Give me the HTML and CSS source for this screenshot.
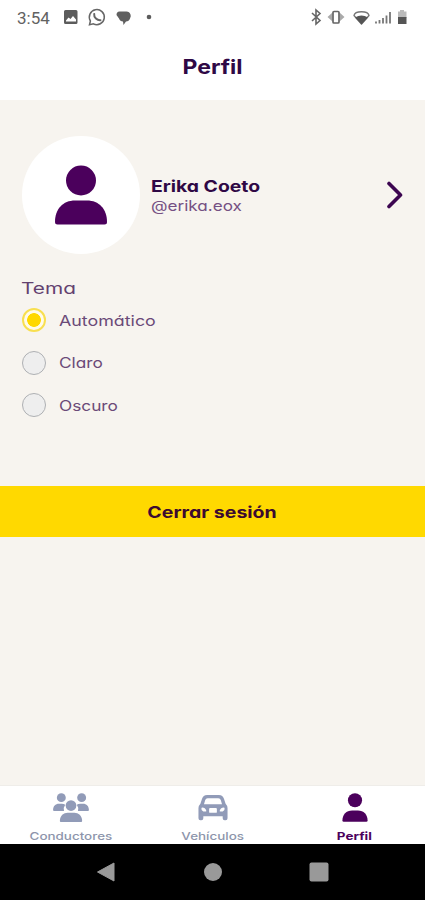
FILE: index.html
```html
<!DOCTYPE html>
<html lang="es">
<head>
  <meta charset="UTF-8">
  <meta name="viewport" content="width=device-width, initial-scale=1.0">
  <title>Perfil</title>
  <link rel="stylesheet" href="styles.css">
</head>
<body>
  <div class="screen">
    <!-- Status bar -->
    <div class="status-bar">
      <span class="clock">3:54</span>
      <svg class="status-left" width="92" height="24" viewBox="0 0 92 24">
        <path fill="#5c5c5c" fill-rule="evenodd" d="M2.500 4H13a1.500 1.500 0 0 1 1.500 1.500v11A1.500 1.500 0 0 1 13 18H2.500A1.500 1.500 0 0 1 1 16.500v-11A1.500 1.500 0 0 1 2.500 4zm.5 11.500h10v-2l-3-3.500-2.500 3-2-1.500-2.500 3z"/>
        <path fill="none" stroke="#666" stroke-width="1.500" d="M26.500 18.700 27.400 15a7.500 7.500 0 1 1 3 2.800z"/>
        <path fill="none" stroke="#666" stroke-width="2" stroke-linecap="round" d="M31.200 8c-.5 3.500 3 6.500 6.300 6.200"/>
        <path fill="#606060" d="M56.500 5.500h7q3 0 4 3 .8 1.500-.5 4-1 3-4 3L60.500 19l-.5-3.500q-3 0-4-3l-2.500-3.500q0-3.500 3-3.500z"/>
        <circle cx="86" cy="11" r="2.300" fill="#5c5c5c"/>
      </svg>
      <svg class="status-right" width="98" height="24" viewBox="0 0 98 24">
        <path fill="none" stroke="#666" stroke-width="1.600" d="M2 7l8 7.500-4 3.500V4l4 3.500L2 15"/>
        <path fill="#aaa" d="M17.500 11l5-4.500v9zM34.500 11l-5-4.500v9z"/>
        <rect x="23" y="5.500" width="6" height="11.500" rx="1" fill="#fff" stroke="#666" stroke-width="1.700"/>
        <path fill="#fff" stroke="#777" stroke-width="1.400" stroke-linejoin="round" d="M44 9.500c1-5 14-5 15 0L51.500 18z"/>
        <path fill="#555" d="M45 11.500q6.500-4 13 0L51.500 18.500z"/>
        <path fill="none" stroke="#777" stroke-width="1.800" d="M66 17.500v-2M69.500 17.500v-3.500M73 17.500V12M76.500 17.500V9.500M80 17.500V6"/>
        <path fill="#bbb" d="M88 5.500h2V4h4v1.500h2.500V12H88z"/>
        <path fill="#555" d="M88 11h8.500v7H88z"/>
      </svg>
    </div>

    <header class="header"><h1>Perfil</h1></header>

    <main class="content">
      <div class="profile">
        <div class="avatar">
          <svg width="52" height="60" viewBox="0 0 52 60">
            <circle cx="26" cy="15.500" r="15"/>
            <path d="M0 57C0 44 8 35.500 20 35.500h12c12 0 20 8.500 20 21.500q0 2.500-2.500 2.500h-47Q0 59.500 0 57z"/>
          </svg>
        </div>
        <div class="profile-text">
          <span class="name">Erika Coeto</span>
          <span class="username">@erika.eox</span>
        </div>
        <svg class="chevron" width="16" height="28" viewBox="0 0 16 28">
          <path d="M2 2.500 13.500 14 2 25.500"/>
        </svg>
      </div>

      <h2 class="theme-title">Tema</h2>
      <label class="option"><input type="radio" name="tema" checked><span class="automatic">Automático</span></label>
      <label class="option"><input type="radio" name="tema"><span>Claro</span></label>
      <label class="option"><input type="radio" name="tema"><span>Oscuro</span></label>

      <button class="logout"><span>Cerrar sesión</span></button>
    </main>

    <!-- Tabs -->
    <nav class="tabs">
      <a class="tab">
        <svg width="38" height="32" viewBox="0 0 38 32">
          <circle cx="9" cy="4.800" r="4.600"/>
          <circle cx="30" cy="4.800" r="4.600"/>
          <path d="M.5 17.500c0-4 2.500-6.500 6-6.500h3q2 0 3.500 1a7.500 7.500 0 0 0-1.200 6.500H1.500q-1 0-1-1zM37.500 17.500c0-4-2.500-6.500-6-6.500h-3q-2 0-3.500 1a7.500 7.500 0 0 1 1.200 6.500h10.300q1 0 1-1z"/>
          <circle cx="19" cy="13" r="5.500"/>
          <path d="M7.500 29c0-5.500 4-8.500 8-8.500h7c4 0 8 3 8 8.500q0 1-1 1h-21q-1 0-1-1z"/>
        </svg>
        <span>Conductores</span>
      </a>
      <a class="tab">
        <svg width="30" height="32" viewBox="0 0 30 32">
          <path fill-rule="evenodd" d="M9 2h12c3 0 4.500 1.500 5.300 4L28 11q2 2 2 4.500V26q0 2-2 2h-1q-2 0-2-2v-2H5v2q0 2-2 2H2q-2 0-2-2V15.500Q0 13 2 11l1.700-5C4.500 3.500 6 2 9 2zm.5 3.500q-2 0-2.600 2L5.700 11.500h18.600l-1.200-4q-.6-2-2.600-2zM4 15q-1 0-1 1.500T5 19h2.500q1 0 .5-1-1-3-4-3zm22 0q1 0 1 1.500T25 19h-2.500q-1 0-.5-1 1-3 4-3zM12 15.500q-1 0-1 1v3q0 1 1 1h6q1 0 1-1v-3q0-1-1-1z"/>
        </svg>
        <span>Vehículos</span>
      </a>
      <a class="tab selected">
        <svg width="26" height="32" viewBox="0 0 26 32">
          <circle cx="13" cy="7.500" r="7.300"/>
          <path d="M0 28.500c0-6.500 4-10.500 10-10.500h6c6 0 10 4 10 10.500q0 1.300-1.300 1.300H1.300Q0 29.800 0 28.500z"/>
        </svg>
        <span>Perfil</span>
      </a>
    </nav>

    <!-- Android navigation -->
    <div class="android-nav">
      <svg width="20" height="20" viewBox="0 0 20 20"><path d="M18 1v18L1.500 10z" stroke="#999" stroke-linejoin="round"/></svg>
      <svg width="20" height="20" viewBox="0 0 20 20"><circle cx="10" cy="10" r="9"/></svg>
      <svg width="20" height="20" viewBox="0 0 20 20"><rect x=".5" y=".5" width="19" height="19" rx="2"/></svg>
    </div>
  </div>
</body>
</html>
```
FILE: styles.css
```css
* {
  box-sizing: border-box;
}
body {
  margin: 0;
  font-family: 'Inter', 'Open Sans', sans-serif;
  font-feature-settings: "cv11"; /* single-storey a */
  color: #2f0845;
}
.screen {
  display: flex;
  flex-direction: column;
  width: 100%;
  height: 900px;
  overflow: hidden;
  background: #f7f4ef;
}
span, h1, h2 {
  white-space: nowrap;
}
.status-bar {
  display: flex;
  height: 34px;
  padding: 6px 17px 0;
  background: #fff;
}
.clock {
  width: 46px;
  font-family: 'Roboto', sans-serif;
  font-size: 17px;
  line-height: 24px;
  color: #626262;
}
.status-right {
  margin-left: auto;
}
.header {
  height: 66px;
  background: #fff;
  text-align: center;
}
.header h1 {
  margin: 0;
  font-size: 20px;
  line-height: 67px;
  transform: scaleX(1.15);
}
.content {
  flex: 1;
  padding-top: 36px;
}
.profile {
  display: flex;
  align-items: center;
  height: 118px;
  padding: 0 22px;
}
.avatar {
  display: flex;
  align-items: center;
  justify-content: center;
  width: 118px;
  height: 118px;
  border-radius: 50%;
  background: #fff;
  fill: #4b005c;
}
.profile-text {
  display: flex;
  flex-direction: column;
  align-items: flex-start;
  margin: 1px 0 0 11px;
}
.name, .username {
  line-height: 19px;
  transform-origin: left;
}
.name {
  font-size: 16px;
  font-weight: 700;
  transform: scaleX(1.21);
}
.username {
  font-size: 14.5px;
  color: #755083;
  transform: scaleX(1.18);
}
.chevron {
  margin-left: auto;
  fill: none;
  stroke: #3c0550;
  stroke-width: 3.6;
  stroke-linecap: round;
  stroke-linejoin: round;
}
.theme-title {
  width: max-content;
  margin: 22px 0 0 21px;
  font-size: 16.5px;
  font-weight: 400;
  line-height: 24px;
  color: #63416f;
  transform: scaleX(1.26);
  transform-origin: left;
}
.option {
  display: flex;
  align-items: center;
  height: 42.5px;
  margin-left: 22px;
  font-size: 14.5px;
  color: #6b4a78;
}
.theme-title + .option {
  margin-top: -1px;
}
.option span {
  transform: scaleX(1.19);
  transform-origin: left;
}
.option .automatic {
  transform: scaleX(1.23);
}
.option input {
  appearance: none;
  width: 24px;
  height: 24px;
  margin: 0 13px 0 0;
  border: 1.5px solid #aeb0b3;
  border-radius: 50%;
  background: #eeeeee;
}
.option input:checked {
  border: 2px solid #f8df50;
  background: radial-gradient(circle, #ffd800 6.5px, #fffbea 7.2px);
}
.logout {
  display: block;
  width: 100%;
  height: 51px;
  margin: 59px 0 0;
  padding: 2px 0 0;
  border: none;
  background: #ffd900;
  font: inherit;
  font-size: 16px;
  font-weight: 700;
  color: #3c0a30;
}
.logout span {
  display: inline-block;
  transform: scaleX(1.22);
}
.tabs {
  display: flex;
  height: 59px;
  padding: 7px 0 0;
  border-top: 1px solid #efede9;
  background: #fff;
  overflow: hidden;
}
.tab {
  display: flex;
  flex: 1;
  flex-direction: column;
  align-items: center;
  font-size: 11px;
  color: #8d95ab;
  fill: #919bb8;
}
.tab svg {
  margin-left: 1px;
}
.tab span {
  margin: 5px 0 0 1px;
  font-weight: 500;
  line-height: 15px;
  transform: scaleX(1.22);
}
.tab.selected {
  color: #4b005c;
  fill: #4b005c;
}
.tab.selected span {
  font-weight: 700;
}
.android-nav {
  display: flex;
  justify-content: space-between;
  align-items: center;
  height: 56px;
  padding: 0 96px;
  background: #000;
  fill: #999;
}
```
